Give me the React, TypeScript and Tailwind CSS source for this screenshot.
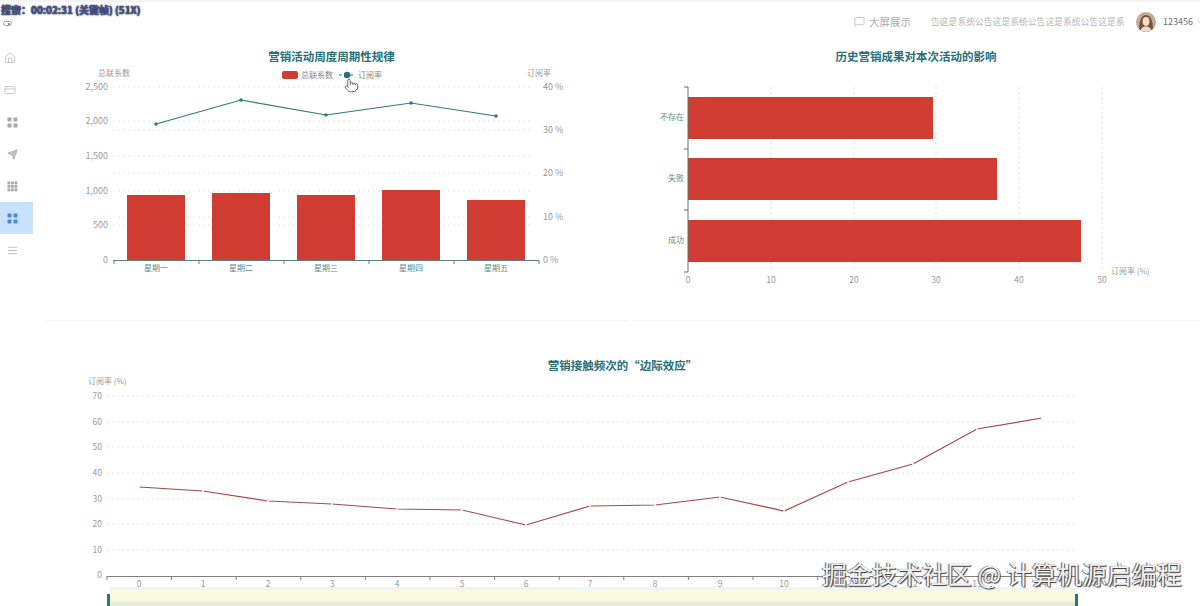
import { AlignJustify, ChevronDown, CreditCard, Home, MessageSquare, Pointer, Send, Volume1 } from 'lucide-react'

const FONT = '"Noto Sans CJK SC", "Liberation Sans", sans-serif'
const RED = '#d03c31'
const TEAL = '#2f7a75'

function FourSquares({ size = 11 }: { size?: number }) {
  return (
    <svg viewBox="0 0 11 11" width={size} height={size} fill="currentColor">
      <rect x="0.5" y="0.5" width="4" height="4" rx="0.7" />
      <rect x="6.5" y="0.5" width="4" height="4" rx="0.7" />
      <rect x="0.5" y="6.5" width="4" height="4" rx="0.7" />
      <rect x="6.5" y="6.5" width="4" height="4" rx="0.7" />
    </svg>
  )
}

function NineSquares({ size = 11 }: { size?: number }) {
  const cells = [0.5, 4, 7.5]
  return (
    <svg viewBox="0 0 11 11" width={size} height={size} fill="currentColor">
      {cells.map((y) => cells.map((x) => <rect key={`${x}-${y}`} x={x} y={y} width="2.8" height="2.8" />))}
    </svg>
  )
}

function WeeklyChart() {
  const leftTicks = [
    { y: 87, label: '2,500' },
    { y: 121, label: '2,000' },
    { y: 156, label: '1,500' },
    { y: 191, label: '1,000' },
    { y: 225, label: '500' },
    { y: 260, label: '0' },
  ]
  const rightTicks = [
    { y: 87, label: '40 %' },
    { y: 130, label: '30 %' },
    { y: 173, label: '20 %' },
    { y: 217, label: '10 %' },
    { y: 260, label: '0 %' },
  ]
  const bars = [
    { x: 127, top: 195, label: '星期一' },
    { x: 212, top: 193, label: '星期二' },
    { x: 297, top: 195, label: '星期三' },
    { x: 382, top: 190, label: '星期四' },
    { x: 467, top: 200, label: '星期五' },
  ]
  const line = [
    [156, 124],
    [241, 100],
    [326, 115],
    [411, 103],
    [496, 116],
  ]

  return (
    <svg viewBox="45 69 585 251" className="h-[251px] w-[585px] overflow-visible" style={{ fontFamily: FONT }}>
      {[87, 121, 130, 156, 173, 191, 217, 225].map((y) => (
        <line key={y} x1="113" x2="532" y1={y} y2={y} stroke="#e3e6e6" strokeWidth="1" strokeDasharray="2 3" />
      ))}
      {leftTicks.map((t) => (
        <text key={t.label} x="108" y={t.y + 3} textAnchor="end" fontSize="9" fill="#9a9a9a">
          {t.label}
        </text>
      ))}
      {rightTicks.map((t) => (
        <text key={t.label} x="543" y={t.y + 3} fontSize="9" fill="#9a9a9a">
          {t.label}
        </text>
      ))}
      <text x="98" y="76" fontSize="8" fill="#9a9a9a">总联系数</text>
      <text x="527" y="76" fontSize="8" fill="#9a9a9a">订阅率</text>

      {bars.map((b) => (
        <g key={b.label}>
          <rect x={b.x} y={b.top} width="58" height={260 - b.top} fill={RED} />
          <text x={b.x + 29} y="271" textAnchor="middle" fontSize="8" fill="#5f8a87">
            {b.label}
          </text>
        </g>
      ))}
      <line x1="113" x2="539" y1="260.5" y2="260.5" stroke="#5f7f7d" />
      {[114, 199, 284, 369, 454, 539].map((x) => (
        <line key={x} x1={x} x2={x} y1="260" y2="264" stroke="#5f7f7d" />
      ))}

      <polyline points={line.map((p) => p.join(',')).join(' ')} fill="none" stroke={TEAL} strokeWidth="1.2" />
      {line.map((p) => (
        <circle key={p[0]} cx={p[0]} cy={p[1]} r="1.8" fill={TEAL} />
      ))}

      <rect x="282" y="71" width="16" height="8" rx="2" fill={RED} />
      <text x="301" y="78" fontSize="8" fill="#858585">总联系数</text>
      <line x1="339" x2="355" y1="75" y2="75" stroke="#2f6f80" strokeWidth="1.2" strokeDasharray="3 2.5" />
      <circle cx="347" cy="75" r="3.2" fill="#256f86" />
      <text x="358" y="78" fontSize="8" fill="#858585">订阅率</text>
    </svg>
  )
}

function ImpactChart() {
  const bars = [
    { label: '不存在', top: 97, right: 933 },
    { label: '失败', top: 158, right: 997 },
    { label: '成功', top: 220, right: 1081 },
  ]
  const ticks = [
    { x: 688, label: '0' },
    { x: 771, label: '10' },
    { x: 854, label: '20' },
    { x: 936, label: '30' },
    { x: 1019, label: '40' },
    { x: 1102, label: '50' },
  ]

  return (
    <svg viewBox="632 69 568 251" className="h-[251px] w-[568px]" style={{ fontFamily: FONT }}>
      {ticks.slice(1).map((t) => (
        <line key={t.x} x1={t.x} x2={t.x} y1="87" y2="272" stroke="#e0e0e0" strokeDasharray="2 3" />
      ))}
      {bars.map((b) => (
        <g key={b.label}>
          <rect x="688" y={b.top} width={b.right - 688} height="42" fill={RED} />
          <text x="684" y={b.top + 23} textAnchor="end" fontSize="8" fill="#5f8a87">
            {b.label}
          </text>
        </g>
      ))}
      <line x1="688" x2="688" y1="87" y2="272" stroke="#5f6f6f" />
      {[87, 149, 210, 272].map((y) => (
        <line key={y} x1="684" x2="688" y1={y} y2={y} stroke="#5f6f6f" />
      ))}
      {ticks.map((t) => (
        <text key={t.label} x={t.x} y="283" textAnchor="middle" fontSize="8.5" fill="#9a9a9a">
          {t.label}
        </text>
      ))}
      <text x="1111" y="274" fontSize="8" fill="#9a9a9a">订阅率 (%)</text>
    </svg>
  )
}

function FrequencyChart() {
  const yTicks = [
    { y: 396, label: '70' },
    { y: 422, label: '60' },
    { y: 447, label: '50' },
    { y: 473, label: '40' },
    { y: 499, label: '30' },
    { y: 524, label: '20' },
    { y: 550, label: '10' },
  ]
  const xLabels = [139, 203, 268, 332, 397, 462, 526, 590, 655, 720, 784, 848, 913, 977, 1042]
  const line = [487, 491, 501, 504, 509, 510, 525, 506, 505, 497, 511, 482, 464, 429, 418]

  return (
    <svg viewBox="45 376 1155 214" className="h-[214px] w-[1155px]" style={{ fontFamily: FONT }}>
      <text x="88" y="384" fontSize="8" fill="#9a9a9a">订阅率 (%)</text>
      {yTicks.map((t) => (
        <g key={t.label}>
          <line x1="107" x2="1076" y1={t.y} y2={t.y} stroke="#e3e6e6" strokeDasharray="2 3" />
          <text x="102" y={t.y + 3} textAnchor="end" fontSize="8.5" fill="#9a9a9a">
            {t.label}
          </text>
        </g>
      ))}
      <text x="102" y="578" textAnchor="end" fontSize="8.5" fill="#9a9a9a">0</text>
      <line x1="107" x2="1076" y1="576.5" y2="576.5" stroke="#808080" />
      {Array.from({ length: 16 }, (_, i) => 107 + i * 64.6).map((x) => (
        <line key={x} x1={x} x2={x} y1="576" y2="580" stroke="#808080" />
      ))}
      {xLabels.map((x, i) => (
        <text key={x} x={x} y="587" textAnchor="middle" fontSize="8.5" fill="#9a9a9a">
          {i}
        </text>
      ))}
      <polyline
        points={xLabels.map((x, i) => `${x},${line[i]}`).join(' ')}
        fill="none"
        stroke="#a5474a"
        strokeWidth="1.2"
      />
      {xLabels.map((x, i) => (
        <circle key={x} cx={x} cy={line[i]} r="1" fill="#fff" />
      ))}
    </svg>
  )
}

function Avatar() {
  return (
    <svg viewBox="0 0 20 20" className="h-[20px] w-[20px] rounded-full">
      <rect width="20" height="20" fill="#c3ab98" />
      <path d="M3 20c0-8 1-17 7-17s7 9 7 17z" fill="#7a5236" />
      <ellipse cx="10" cy="9.5" rx="3.4" ry="4.4" fill="#f5dccf" />
      <path d="M4 20c1-4 3-5.5 6-5.5s5 1.5 6 5.5z" fill="#ecdcd0" />
    </svg>
  )
}

export default function App() {
  return (
    <div className="relative flex h-[606px] w-[1200px] flex-col overflow-hidden bg-white" style={{ fontFamily: FONT }}>
      {/* recorder overlay */}
      <div className="absolute left-[1px] top-[3px] text-[10px] font-bold leading-[14px] text-[#4a559f] [text-shadow:0_0_1px_#111,0_0_2px_#333]">
        搜索：00:02:31 (关键帧) (51X)
      </div>
      <div className="absolute left-[3px] top-[21px] flex h-[5px] w-[9px] items-center justify-end rounded-full border border-gray-400 pr-[1px]">
        <div className="h-[2px] w-[2px] rounded-full bg-gray-500" />
      </div>

      <header className="flex h-[40px] items-center justify-end border-t-2 border-[#f4f4f4] pt-[1px] text-[#adadad]">
        <MessageSquare size={11} strokeWidth={1.5} className="mr-[4px]" />
        <span className="mr-[20px] text-[10.5px]">大屏展示</span>
        <div className="relative mr-[11px] w-[194px] text-[8.8px] leading-[14px] text-[#b5b5b5]">
          告这是系统公告这是系统公告这是系统公告这是系
          <Volume1 size={10} className="absolute left-[8px] top-[2px] text-[#dcd9a0]" />
        </div>
        <Avatar />
        <span className="ml-[7px] text-[9px] text-[#6f6f6f]">123456</span>
        <ChevronDown size={8} className="-mr-[4px] ml-[3px]" />
      </header>

      <div className="flex min-h-0 flex-1">
        <aside className="w-[45px] shrink-0 pt-[2px]">
          <nav className="flex w-[33px] flex-col text-[#a8a8a8]">
            <div className="flex h-[32px] items-center pl-[4px]">
              <Home size={12} strokeWidth={1.2} />
            </div>
            <div className="flex h-[32px] items-center pl-[4px]">
              <CreditCard size={12} strokeWidth={1.2} />
            </div>
            <div className="flex h-[32px] items-center pl-[7px]">
              <FourSquares />
            </div>
            <div className="flex h-[32px] items-center pl-[7px]">
              <Send size={11} strokeWidth={1.5} className="fill-[#c8c8c8]" />
            </div>
            <div className="flex h-[32px] items-center pl-[7px]">
              <NineSquares />
            </div>
            <div className="flex h-[32px] items-center bg-[#c8e1fd] pl-[7px] text-[#4d8ad0]">
              <FourSquares />
            </div>
            <div className="flex h-[32px] items-center pl-[7px]">
              <AlignJustify size={11} strokeWidth={1.5} />
            </div>
          </nav>
        </aside>

        <main className="flex min-w-0 flex-1 flex-col">
          <section className="grid h-[280px] shrink-0 grid-cols-[585px_568px] gap-[2px]">
            <div className="border-b border-[#f7f7f7]">
              <h2 className="h-[29px] pr-[12px] pt-[7px] text-center text-[11.5px] font-bold leading-[18px] text-[#2a6f77]">
                营销活动周度周期性规律
              </h2>
              <WeeklyChart />
            </div>
            <div className="border-b border-[#f7f7f7]">
              <h2 className="h-[29px] pt-[7px] text-center text-[11.5px] font-bold leading-[18px] text-[#2a6f77]">
                历史营销成果对本次活动的影响
              </h2>
              <ImpactChart />
            </div>
          </section>

          <section className="flex min-h-0 flex-1 flex-col">
            <h2 className="h-[56px] shrink-0 pt-[36px] text-center text-[11.5px] font-bold leading-[18px] text-[#2a6f77]">
              营销接触频次的“边际效应”
            </h2>
            <FrequencyChart />
            <div className="relative ml-[65px] -mt-[3px] h-[19px] w-[966px] border-t-[3px] border-[#eef2fb] bg-gradient-to-b from-[#f8f9df] from-60% to-[#e6ecd8] to-80%">
              <div className="absolute -left-[3px] top-[4px] h-[12px] w-[3px] bg-[#2f6f80]" />
              <div className="absolute -right-[2px] top-[4px] h-[12px] w-[3px] bg-[#2f6f80]" />
            </div>
          </section>
        </main>
      </div>

      {/* pointer over the legend */}
      <Pointer size={15} strokeWidth={1.4} className="absolute left-[344px] top-[78px] fill-white text-[#555]" />

      {/* watermark */}
      <div className="absolute left-[822px] top-[556px] whitespace-nowrap text-[25px] leading-[34px] text-[#f2f2f2] [text-shadow:1px_1px_1px_#333,-1px_0_1px_#555]">
        掘金技术社区 @ 计算机源启编程
      </div>
    </div>
  )
}
